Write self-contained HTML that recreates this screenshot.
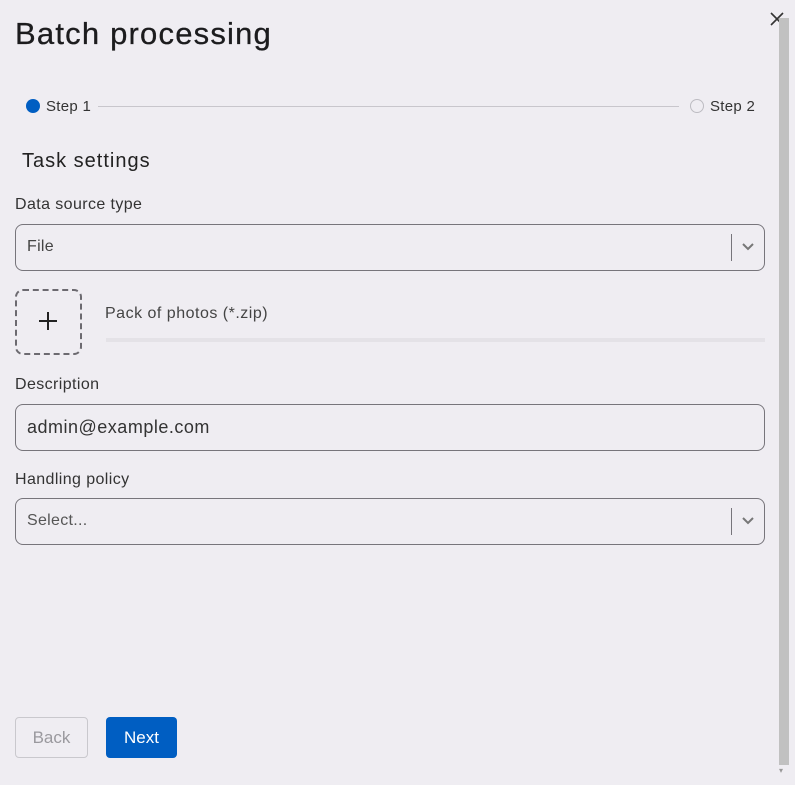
<!DOCTYPE html>
<html><head><meta charset="utf-8"><style>
*{box-sizing:border-box;margin:0;padding:0}
body{width:795px;height:785px;background:#efedf2;font-family:"Liberation Sans",sans-serif;color:#222;position:relative;overflow:hidden}
.abs{position:absolute}
h1{position:absolute;left:15px;top:16px;font-size:31px;font-weight:normal;color:#1c1c1e;letter-spacing:1.2px;-webkit-text-stroke:0.3px #1c1c1e}
.lbl{position:absolute;left:15px;font-size:16px;color:#333;letter-spacing:0.4px}
.box{position:absolute;left:15px;width:750px;height:47px;border:1px solid #77757b;border-radius:8px;background:#efedf2}
.box span{position:absolute;left:11px;top:13px;font-size:16px;color:#444;letter-spacing:0.3px}
.sep{position:absolute;right:32px;top:9px;width:1px;height:27px;background:#77757b}
.chev{position:absolute;right:10px;top:17px}
</style></head><body>
<h1>Batch processing</h1>
<svg class="abs" style="left:768px;top:10px" width="18" height="18" viewBox="0 0 18 18"><path d="M3 3L15 15M15 3L3 15" stroke="#333" stroke-width="1.6"/></svg>
<div class="abs" style="left:779px;top:18px;width:10px;height:747px;background:#c1c1c1"></div>
<div class="abs" style="left:779px;top:766px;font-size:8px;color:#999">▾</div>
<div class="abs" style="left:26px;top:99px;width:14px;height:14px;border-radius:50%;background:#005ec2"></div>
<div class="abs" style="left:46px;top:98px;font-size:15px;color:#333;letter-spacing:0.3px">Step 1</div>
<div class="abs" style="left:98px;top:106px;width:581px;height:1px;background:#c8c6cc"></div>
<div class="abs" style="left:690px;top:99px;width:14px;height:14px;border-radius:50%;border:1.5px solid #bdbcc2"></div>
<div class="abs" style="left:710px;top:98px;font-size:15px;color:#333;letter-spacing:0.3px">Step 2</div>
<div class="abs" style="left:22px;top:150px;font-size:20px;color:#222;letter-spacing:1px">Task settings</div>
<div class="lbl" style="top:196px">Data source type</div>
<div class="box" style="top:224px"><span>File</span><div class="sep"></div><svg class="chev" width="12" height="10" viewBox="0 0 12 10"><path d="M1 2L6 7L11 2" fill="none" stroke="#777" stroke-width="2"/></svg></div>
<div class="abs" style="left:15px;top:289px;width:67px;height:66px;border:2px dashed #6c6a70;border-radius:8px"></div>
<svg class="abs" style="left:38px;top:311px" width="20" height="20" viewBox="0 0 20 20"><path d="M10 1V19M1 10H19" stroke="#222" stroke-width="2"/></svg>
<div class="abs" style="left:105px;top:305px;font-size:16px;color:#444;letter-spacing:0.5px">Pack of photos (*.zip)</div>
<div class="abs" style="left:106px;top:338px;width:659px;height:4px;background:#e4e2e7"></div>
<div class="lbl" style="top:376px">Description</div>
<div class="box" style="top:404px"><span style="top:12px;font-size:18px;color:#333;letter-spacing:0.5px">admin@example.com</span></div>
<div class="lbl" style="top:471px">Handling policy</div>
<div class="box" style="top:498px"><span style="color:#555">Select...</span><div class="sep"></div><svg class="chev" width="12" height="10" viewBox="0 0 12 10"><path d="M1 2L6 7L11 2" fill="none" stroke="#777" stroke-width="2"/></svg></div>
<div class="abs" style="left:15px;top:717px;width:73px;height:41px;border:1px solid #c9c8cd;border-radius:4px;font-size:17px;color:#9a999e;text-align:center;line-height:39px">Back</div>
<div class="abs" style="left:106px;top:717px;width:71px;height:41px;background:#005ec2;border-radius:4px;font-size:17px;color:#fff;text-align:center;line-height:41px">Next</div>
</body></html>
